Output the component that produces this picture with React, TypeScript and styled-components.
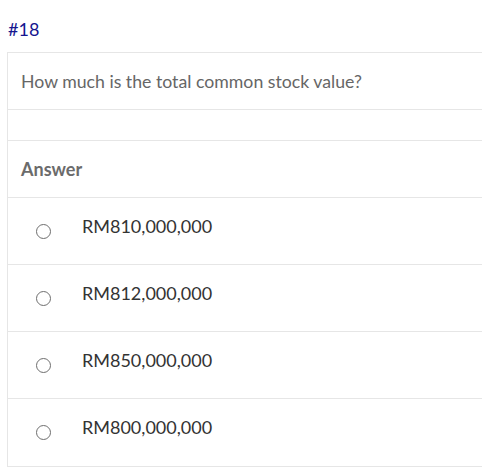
import React from 'react';
import styled, { createGlobalStyle } from 'styled-components';

const GlobalStyle = createGlobalStyle`
	body {
		margin: 0;
		background: #ffffff;
		font-family: Lato, "Open Sans", sans-serif;
	}
`;

export default function App() {
	return (
		<>
			<GlobalStyle />
			<Page>
				<Number>#18</Number>
				<Card>
					<Question>How much is the total common stock value?</Question>
					<Spacer />
					<AnswerHead>Answer</AnswerHead>
					{options.map((o) => (
						<Option key={o}>
							<Radio />
							<OptionText>{o}</OptionText>
						</Option>
					))}
				</Card>
			</Page>
		</>
	);
}

const options = ['RM810,000,000', 'RM812,000,000', 'RM850,000,000', 'RM800,000,000'];

const Page = styled.div`
	width: 482px;
	height: 472px;
	overflow: hidden;
	padding: 19px 0 0 7px;
	box-sizing: border-box;
`;
const Number = styled.div`
	height: 33px;
	padding-left: 1px;
	font-size: 18px;
	line-height: 20px;
	color: #15158f;
`;
const Card = styled.div`
	width: 500px;
	border: 1px solid #e6e6e6;
	border-right: none;
`;
const Row = styled.div`
	display: flex;
	align-items: center;
	border-bottom: 1px solid #e6e6e6;
	box-sizing: border-box;
`;
const Question = styled(Row)`
	height: 57px;
	padding-left: 13px;
	font-size: 17.7px;
	color: #666666;
`;
const Spacer = styled(Row)`
	height: 31px;
`;
const AnswerHead = styled(Row)`
	height: 57px;
	padding-left: 13px;
	font-size: 18px;
	font-weight: 700;
	color: #6b6b6b;
`;
const Option = styled(Row)`
	height: 67px;
	padding-left: 28px;
	&:last-child {
		border-bottom: none;
	}
`;
const Radio = styled.span`
	width: 13px;
	height: 13px;
	border: 1px solid #6e6e6e;
	border-radius: 50%;
	flex-shrink: 0;
`;
const OptionText = styled.span`
	margin-left: 31px;
	margin-bottom: 11px;
	font-size: 18px;
	color: #333333;
`;
